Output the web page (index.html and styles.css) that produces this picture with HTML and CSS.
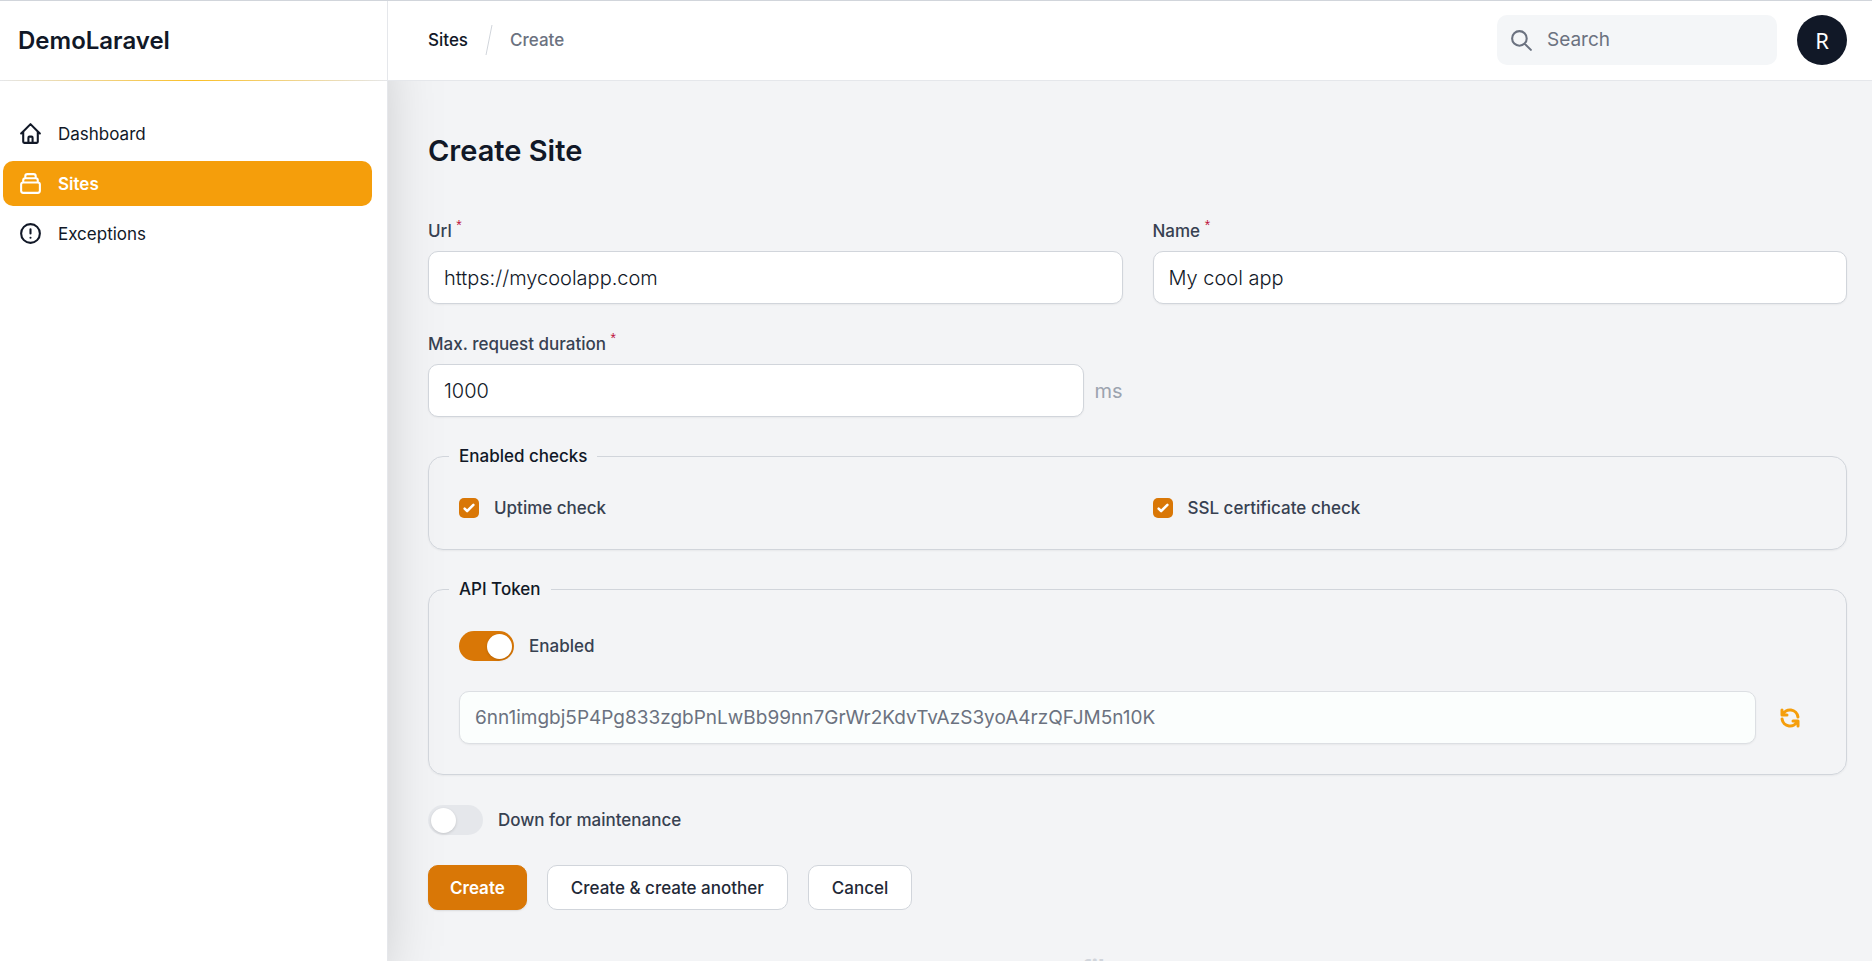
FILE: index.html
```html
<!DOCTYPE html>
<html lang="en">
<head>
<meta charset="utf-8">
<meta name="viewport" content="width=device-width, initial-scale=1">
<title>Create Site - DemoLaravel</title>
<link rel="stylesheet" href="styles.css">
</head>
<body>
<div class="app">
  <aside class="sidebar">
    <div class="sidebar-header"><a class="brand" href="#">DemoLaravel</a></div>
    <nav class="nav">
      <a class="nav-item" href="#">
        <svg class="icon" viewBox="0 0 24 24"><path d="M3 12l2-2m0 0l7-7 7 7M5 10v10a1 1 0 001 1h3m10-11l2 2m-2-2v10a1 1 0 01-1 1h-3m-6 0a1 1 0 001-1v-4a1 1 0 011-1h2a1 1 0 011 1v4a1 1 0 001 1m-6 0h6"/></svg>
        <span>Dashboard</span>
      </a>
      <a class="nav-item nav-item-active" href="#" aria-current="page">
        <svg class="icon" viewBox="0 0 24 24"><path d="M19 11H5m14 0a2 2 0 012 2v6a2 2 0 01-2 2H5a2 2 0 01-2-2v-6a2 2 0 012-2m14 0V9a2 2 0 00-2-2M5 11V9a2 2 0 012-2m0 0V5a2 2 0 012-2h6a2 2 0 012 2v2M7 7h10"/></svg>
        <span>Sites</span>
      </a>
      <a class="nav-item" href="#">
        <svg class="icon" viewBox="0 0 24 24"><path d="M12 8v4m0 4h.01M21 12a9 9 0 11-18 0 9 9 0 0118 0z"/></svg>
        <span>Exceptions</span>
      </a>
    </nav>
  </aside>
  <div class="content">
    <header class="topbar">
      <nav class="breadcrumbs" aria-label="Breadcrumb">
        <a class="crumb" href="#">Sites</a>
        <svg class="slash" viewBox="0 0 8 30"><path d="M7 0L1 30"/></svg>
        <a class="crumb crumb-current" href="#">Create</a>
      </nav>
      <div class="search">
        <svg class="icon" viewBox="0 0 24 24"><path d="M21 21l-6-6m2-5a7 7 0 11-14 0 7 7 0 0114 0z"/></svg>
        <input class="search-input" type="search" placeholder="Search" aria-label="Search">
      </div>
      <button class="avatar" type="button" aria-label="User menu">R</button>
    </header>
    <main class="main">
      <h1 class="title">Create Site</h1>
      <form class="form">
        <div class="columns">
          <div class="field">
            <label class="label" for="url">Url <sup class="required">*</sup></label>
            <input class="input" id="url" type="text" value="https://mycoolapp.com">
          </div>
          <div class="field">
            <label class="label" for="name">Name <sup class="required">*</sup></label>
            <input class="input" id="name" type="text" value="My cool app">
          </div>
          <div class="field">
            <label class="label" for="duration">Max. request duration <sup class="required">*</sup></label>
            <div class="affix">
              <input class="input" id="duration" type="text" value="1000">
              <span class="suffix">ms</span>
            </div>
          </div>
        </div>
        <fieldset class="group">
          <legend class="legend">Enabled checks</legend>
          <div class="columns">
            <label class="check"><input class="checkbox" type="checkbox" checked><span>Uptime check</span></label>
            <label class="check"><input class="checkbox" type="checkbox" checked><span>SSL certificate check</span></label>
          </div>
        </fieldset>
        <fieldset class="group">
          <legend class="legend">API Token</legend>
          <div class="stack">
            <label class="check switch-row"><input class="switch" type="checkbox" role="switch" checked><span>Enabled</span></label>
            <div class="token">
              <input class="input" type="text" aria-label="API token" value="6nn1imgbj5P4Pg833zgbPnLwBb99nn7GrWr2KdvTvAzS3yoA4rzQFJM5n10K" disabled>
              <button class="refresh" type="button" aria-label="Regenerate token">
                <svg class="icon-refresh" viewBox="0 0 24 24"><path d="M4 4v5h.582m15.356 2A8.001 8.001 0 004.582 9m0 0H9m11 11v-5h-.581m0 0a8.003 8.003 0 01-15.357-2m15.357 2H15"/></svg>
              </button>
            </div>
          </div>
        </fieldset>
        <label class="check switch-row"><input class="switch" type="checkbox" role="switch"><span>Down for maintenance</span></label>
        <div class="actions">
          <button class="button button-primary" type="submit">Create</button>
          <button class="button" type="button">Create &amp; create another</button>
          <button class="button" type="button">Cancel</button>
        </div>
      </form>
    </main>
    <footer class="footer"><a class="footer-link" href="#">filament</a></footer>
  </div>
</div>
</body>
</html>
```
FILE: styles.css
```css
*, *::before, *::after { box-sizing: border-box; }

body {
  margin: 0;
  background: #f3f4f6;
  color: #111827;
  font-family: Inter, "Liberation Sans", sans-serif;
  font-size: 17px;
  line-height: 24px;
}

a { color: inherit; text-decoration: none; }
button, input { font: inherit; color: inherit; margin: 0; }
button { cursor: pointer; }

.app {
  display: flex;
  height: 100vh;
  overflow: hidden;
  border-top: 1px solid #d1d5db;
}

.icon {
  flex: none;
  width: 25px;
  height: 25px;
  fill: none;
  stroke: currentColor;
  stroke-width: 2;
  stroke-linecap: round;
  stroke-linejoin: round;
}

/* Sidebar */
.sidebar {
  flex: none;
  width: 388px;
  background: #fff;
  border-right: 1px solid #e5e7eb;
  box-shadow: 0 31px 62px -15px rgba(0, 0, 0, 0.25);
}
.sidebar-header {
  display: flex;
  align-items: center;
  height: 80px;
  padding: 0 18px;
  border-bottom: 1px solid;
  border-image: linear-gradient(to right, #e5e7eb, #fbbf24, #e5e7eb) 1;
}
.brand { font-size: 24px; font-weight: 600; line-height: 32px; }
.nav {
  display: flex;
  flex-direction: column;
  gap: 5px;
  padding: 30px 15px 30px 3px;
}
.nav-item {
  display: flex;
  align-items: center;
  gap: 15px;
  height: 45px;
  padding: 0 15px;
  border-radius: 10px;
}
.nav-item-active { background: #f59e0b; color: #fff; font-weight: 600; }

/* Top bar */
.content { flex: 1; min-width: 0; display: flex; flex-direction: column; }
.topbar {
  position: relative;
  flex: none;
  display: flex;
  align-items: center;
  height: 80px;
  padding: 0 25px 1px 40px;
  background: #fff;
  border-bottom: 1px solid #e5e7eb;
}
.breadcrumbs { flex: 1; display: flex; align-items: center; gap: 17px; }
.crumb { font-weight: 500; }
.crumb-current { color: #6b7280; }
.slash { width: 8px; height: 30px; fill: none; stroke: #d1d5db; stroke-width: 1; }
.search {
  display: flex;
  align-items: center;
  gap: 13px;
  width: 280px;
  height: 50px;
  padding: 0 12px;
  border-radius: 10px;
  background: #f4f6f8;
  color: #6b7280;
}
.search-input {
  flex: 1;
  min-width: 0;
  padding: 0;
  border: 0;
  outline: 0;
  background: none;
  font-size: 19px;
}
.search-input::placeholder { color: #6b7280; opacity: 1; }
.avatar {
  width: 50px;
  height: 50px;
  margin-left: 20px;
  padding: 0;
  border: 0;
  border-radius: 50%;
  background: #111827;
  color: #fff;
  font-family: "Noto Sans", sans-serif;
  font-size: 22px;
}

/* Form */
.main { padding: 50px 25px 0 40px; }
.title { margin: 0 0 48px; font-size: 29px; font-weight: 600; line-height: 40px; }
.form { display: flex; flex-direction: column; gap: 28px; }
.columns { display: grid; grid-template-columns: 1fr 1fr; gap: 28px 30px; }
.field { display: flex; flex-direction: column; gap: 8px; min-width: 0; }
.label { color: #374151; }
.required { color: #be123c; font-family: "Liberation Sans", sans-serif; font-size: 14px; line-height: 0; }
.input {
  flex: 1;
  width: 100%;
  min-width: 0;
  height: 53px;
  padding: 0 15px;
  border: 1px solid #d1d5db;
  border-radius: 10px;
  background: #fff;
  box-shadow: 0 1px 2px rgba(0, 0, 0, 0.05);
  font-size: 20px;
  font-weight: 300;
}
.field > .input { flex: none; }
.input:disabled {
  border-color: #dcdfe3;
  background: #fbfefd;
  color: #6b7280;
  font-size: 19px;
  font-weight: 400;
}
.affix { display: flex; align-items: center; gap: 10px; }
.suffix { color: #9ca3af; font-size: 20px; }
.group {
  min-width: 0;
  margin: 0;
  padding: 29px 30px;
  border: 1px solid #d1d5db;
  border-radius: 15px;
  box-shadow: 0 1px 2px rgba(0, 0, 0, 0.05);
}
.legend { margin-left: -10px; padding: 0 10px; line-height: 22px; }
.check { display: flex; align-items: center; gap: 15px; color: #374151; }
.label, .legend, .check { font-weight: 450; }
.checkbox {
  appearance: none;
  flex: none;
  width: 20px;
  height: 20px;
  border-radius: 5px;
  background: #fff;
  border: 1px solid #d1d5db;
}
.checkbox:checked {
  border: 0;
  background: #d97706 url("data:image/svg+xml,%3Csvg viewBox='0 0 16 16' fill='white' xmlns='http://www.w3.org/2000/svg'%3E%3Cpath d='M12.207 4.793a1 1 0 010 1.414l-5 5a1 1 0 01-1.414 0l-2-2a1 1 0 011.414-1.414L6.5 9.086l4.293-4.293a1 1 0 011.414 0z'/%3E%3C/svg%3E") center / 100% 100%;
}
.stack { display: flex; flex-direction: column; gap: 28px; padding-bottom: 1px; }
.switch-row { padding: 2px 0; }
.switch {
  appearance: none;
  flex: none;
  display: flex;
  align-items: center;
  width: 55px;
  height: 30px;
  padding: 0 3px;
  border-radius: 15px;
  background: #e5e7eb;
}
.switch::before {
  content: "";
  width: 25px;
  height: 25px;
  border-radius: 50%;
  background: #fff;
  box-shadow: 0 1px 3px rgba(0, 0, 0, 0.15);
}
.switch:checked { justify-content: flex-end; padding: 0 2px; background: #d97706; }
.token { display: flex; align-items: center; gap: 10px; }
.refresh {
  display: flex;
  align-items: center;
  justify-content: center;
  width: 50px;
  height: 50px;
  padding: 0 2px 0 0;
  border: 0;
  background: none;
  color: #f59e0b;
}
.icon-refresh {
  width: 24px;
  height: 24px;
  fill: none;
  stroke: currentColor;
  stroke-width: 3;
  stroke-linecap: round;
  stroke-linejoin: round;
}
.actions { display: flex; gap: 20px; }
.button {
  height: 45px;
  padding: 0 23px;
  border: 1px solid #d1d5db;
  border-radius: 10px;
  background: #fff;
  color: #1f2937;
  font-weight: 500;
}
.button-primary {
  padding: 0 21px;
  border-color: #d97706;
  background: #d97706;
  color: #fff;
  font-weight: 600;
  box-shadow: 0 1px 2px rgba(0, 0, 0, 0.1);
}
.footer { display: flex; justify-content: center; padding: 43px 0 30px; }
.footer-link { color: #d1d5db; font-size: 24px; font-weight: 700; line-height: 32px; }
```
